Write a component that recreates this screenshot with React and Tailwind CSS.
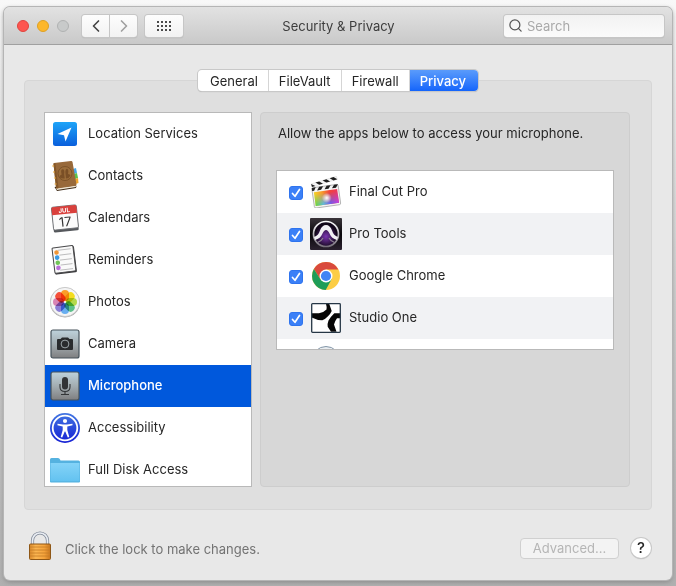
import { useState } from 'react';
import { ChevronLeft, ChevronRight, Search } from 'lucide-react';

function LocationIcon() {
    return (
        <svg viewBox="0 0 32 32" className="size-8" aria-hidden="true">
            <defs>
                <linearGradient id="loc" x1="0" y1="0" x2="0" y2="1">
                    <stop offset="0" stopColor="#1ea4f8" />
                    <stop offset="1" stopColor="#0a5fdc" />
                </linearGradient>
            </defs>
            <rect x="4" y="4" width="24" height="24" rx="2.5" fill="url(#loc)" />
            <path d="M22.5 9.5 L8.5 16 L15 17.2 L16.5 23.5 Z" fill="#fff" />
        </svg>
    );
}

function ContactsIcon() {
    return (
        <svg viewBox="0 0 32 32" className="size-8" aria-hidden="true">
            <path d="M24 9 l3 -1 1 5 -3 1z" fill="#4aa8e8" />
            <path d="M25 14 l3 -1 1 5 -3 1z" fill="#5bc24a" />
            <path d="M26 19 l3 -1 0.5 5 -3 1z" fill="#f0a52e" />
            <path d="M5.5 27 L25 24 L27.5 26 L27 28 L8 31 Z" fill="#3f2c18" />
            <path d="M7 28 L26.5 25.5 L27 27 L8 30 Z" fill="#efe6d4" />
            <path d="M4.5 4 Q4 3.2 5 3 L22 1 Q23.2 0.9 23.5 2 L27.5 24.5 Q27.6 25.5 26.5 25.7 L8 28.5 Q7.2 28.6 7 27.6 Z" fill="#98693a" />
            <path d="M4.5 4 L6.3 3 L9.5 28 L8 28.5 Q7.2 28.6 7 27.6 Z" fill="#835628" />
            <path d="M3.2 6 h2 M4 12 h2 M5 18 h2 M5.6 24 h2" stroke="#e7a537" strokeWidth="1.2" />
            <circle cx="16" cy="13.5" r="7" fill="#9c6e3b" stroke="#7d5329" strokeWidth="1" />
            <path d="M10.5 17 Q10.5 15 12.7 14.5 Q11.2 9.5 13.5 9.2 Q16 9 15.2 14 L15.7 18.5 Q12 19 10.5 17 Z M21.5 15.5 Q21 14 19 14 Q20 9 17.900 8.800 Q15.900 9 16.500 14 L17 18.500 Q20.500 18 21.500 15.500 Z" fill="#7a4f26" />
        </svg>
    );
}

function CalendarIcon() {
    return (
        <svg viewBox="0 0 32 32" className="size-8" aria-hidden="true">
            <g transform="rotate(-6 16 16)">
                <rect x="3.500" y="4" width="25" height="25.500" rx="1.500" fill="#55585c" />
                <rect x="3.500" y="4" width="25" height="23" rx="1.500" fill="#fbfbfb" stroke="#6c6f73" strokeWidth="0.900" />
                <path d="M3.500 12 V5.500 Q3.500 4 5 4 H27 Q28.500 4 28.500 5.500 V12 Z" fill="#d9403c" />
                <text x="16" y="10.500" fontSize="6" fontWeight="700" fill="#fff" textAnchor="middle">JUL</text>
                <text x="16" y="24.500" fontSize="13" fill="#333" textAnchor="middle">17</text>
            </g>
        </svg>
    );
}

function RemindersIcon() {
    return (
        <svg viewBox="0 0 32 32" className="size-8" aria-hidden="true">
            <g transform="rotate(-7 16 16)">
                <rect x="4.500" y="3" width="22" height="26.500" rx="1.500" fill="#3c3c3e" />
                <rect x="4.500" y="2.500" width="21" height="25.500" rx="1" fill="#fafafa" stroke="#4b4b4d" strokeWidth="1" />
                <path d="M10 5.500 H23 M11 10.500 H23 M11 15.500 H23 M11 20.500 H23 M10 25.500 H23" stroke="#b0b0b2" strokeWidth="0.800" />
                <circle cx="8.500" cy="7.500" r="2.300" fill="#ef9536" />
                <circle cx="8.500" cy="12.700" r="2.300" fill="#3b9be4" />
                <circle cx="8.500" cy="17.900" r="2.300" fill="#71c557" />
                <circle cx="8.500" cy="23" r="2.300" fill="#b96fd8" />
            </g>
        </svg>
    );
}

const petals = ['#fb9d28', '#f4dc1e', '#b4d94c', '#5cc08a', '#68aef0', '#8a7ed6', '#d884b4', '#f4503a'];

function PhotosIcon() {
    return (
        <svg viewBox="0 0 32 32" className="size-8" aria-hidden="true">
            <circle cx="16" cy="16.500" r="15" fill="#a8a8a8" />
            <circle cx="16" cy="16" r="14.600" fill="#f4f4f4" stroke="#c4c4c4" strokeWidth="0.800" />
            <g className="isolate">
                {petals.map((color, i) => (
                    <rect
                        key={color}
                        x="12"
                        y="4"
                        width="8"
                        height="11"
                        rx="4"
                        fill={color}
                        transform={`rotate(${i * 45} 16 16)`}
                        className="mix-blend-multiply"
                    />
                ))}
            </g>
        </svg>
    );
}

function MetalTile({ id, children }) {
    return (
        <svg viewBox="0 0 32 32" className="size-8" aria-hidden="true">
            <defs>
                <linearGradient id={id} x1="0" y1="0" x2="0" y2="1">
                    <stop offset="0" stopColor="#bed2dc" />
                    <stop offset="0.500" stopColor="#a3adb1" />
                    <stop offset="1" stopColor="#7f7f80" />
                </linearGradient>
            </defs>
            <rect x="2" y="2" width="28" height="28" rx="2" fill={`url(#${id})`} stroke="#46535b" strokeWidth="1.200" />
            {children}
        </svg>
    );
}

function CameraIcon() {
    return (
        <MetalTile id="cam">
            <path d="M9 11 H11.500 L13 9.500 H19 L20.500 11 H23 Q24 11 24 12 V21 Q24 22 23 22 H9 Q8 22 8 21 V12 Q8 11 9 11 Z" fill="#292b2d" />
            <circle cx="16" cy="16" r="3.900" fill="#292b2d" stroke="#9aa3a7" strokeWidth="1" />
        </MetalTile>
    );
}

function MicrophoneIcon() {
    return (
        <MetalTile id="mic">
            <rect x="13" y="7" width="6" height="12.500" rx="3" fill="#323436" />
            <path d="M11 14 V17 Q11 21.500 16 21.500 Q21 21.500 21 17 V14 M16 21.500 V24 M12 24.500 H20" fill="none" stroke="#323436" strokeWidth="1.100" />
        </MetalTile>
    );
}

function AccessibilityIcon() {
    return (
        <svg viewBox="0 0 32 32" className="size-8" aria-hidden="true">
            <defs>
                <linearGradient id="acc" x1="0" y1="0" x2="0" y2="1">
                    <stop offset="0" stopColor="#4276e2" />
                    <stop offset="1" stopColor="#1520d4" />
                </linearGradient>
            </defs>
            <circle cx="16" cy="16" r="15" fill="url(#acc)" />
            <circle cx="16" cy="16" r="12.300" fill="none" stroke="#fff" strokeWidth="1.800" />
            <circle cx="16" cy="9" r="2.100" fill="#fff" />
            <path d="M8.500 11.800 L14 12.500 H18 L23.500 11.800 V13.300 L18.300 14.500 V18 L20.300 25 L18.800 25.500 L16.300 19.500 H15.700 L13.200 25.500 L11.700 25 L13.700 18 V14.500 L8.500 13.300 Z" fill="#fff" />
        </svg>
    );
}

function FolderIcon() {
    return (
        <svg viewBox="0 0 32 32" className="size-8" aria-hidden="true">
            <defs>
                <linearGradient id="folder" x1="0" y1="0" x2="0" y2="1">
                    <stop offset="0" stopColor="#84d3f8" />
                    <stop offset="1" stopColor="#63c2f0" />
                </linearGradient>
            </defs>
            <path d="M1 27.500 V5.500 Q1 4 2.500 4 H9 Q10.500 4 11 5.500 L11.500 6.500 H29.500 Q31 6.500 31 8 V27.500 Q31 28.500 30 28.500 H2 Q1 28.500 1 27.500 Z" fill="#55b2e0" />
            <path d="M1.500 9 H30.500 V26.500 Q30.500 27.300 29.700 27.300 H2.300 Q1.500 27.300 1.500 26.500 Z" fill="url(#folder)" />
        </svg>
    );
}

function FinalCutIcon() {
    return (
        <svg viewBox="0 0 32 32" className="size-8" aria-hidden="true">
            <defs>
                <linearGradient id="fcpHue" x1="0" y1="0" x2="1" y2="0">
                    <stop offset="0" stopColor="#f3d22a" />
                    <stop offset="0.350" stopColor="#f79a2c" />
                    <stop offset="0.650" stopColor="#f3433a" />
                    <stop offset="1" stopColor="#ec3a5c" />
                </linearGradient>
                <linearGradient id="fcpLow" x1="0" y1="0" x2="1" y2="0">
                    <stop offset="0" stopColor="#5fd445" />
                    <stop offset="0.350" stopColor="#58b8e8" />
                    <stop offset="0.650" stopColor="#6a5cf2" />
                    <stop offset="1" stopColor="#c63ee0" />
                </linearGradient>
                <linearGradient id="fcpFade" x1="0" y1="0" x2="0" y2="1">
                    <stop offset="0.200" stopColor="#000" />
                    <stop offset="0.900" stopColor="#fff" />
                </linearGradient>
                <mask id="fcpMask">
                    <rect x="3" y="13" width="27" height="17" fill="url(#fcpFade)" />
                </mask>
                <radialGradient id="fcpGlow">
                    <stop offset="0" stopColor="#fff" />
                    <stop offset="1" stopColor="#fff" stopOpacity="0" />
                </radialGradient>
            </defs>
            <g transform="rotate(-8 16 20)">
                <rect x="3" y="10" width="26.500" height="20.500" rx="1.500" fill="#f4f4f4" stroke="#a8a8a8" strokeWidth="0.800" />
                <rect x="4.500" y="14.500" width="23.500" height="14" fill="url(#fcpHue)" />
                <rect x="4.500" y="14.500" width="23.500" height="14" fill="url(#fcpLow)" mask="url(#fcpMask)" />
                <circle cx="16.500" cy="22" r="5" fill="url(#fcpGlow)" />
                <path d="M3 10 h4 l-2 3.200 h-2z M10.500 10 h4 l-2.500 3.200 h-4z M18 10 h4 l-2.500 3.200 h-4z M25.500 10 h4 l-2.500 3.200 h-4z" fill="#1d1d1d" />
            </g>
            <g transform="rotate(-17 2 11)">
                <rect x="2" y="7.800" width="26.500" height="3.200" fill="#f4f4f4" stroke="#c4c4c4" strokeWidth="0.300" />
                <path d="M2 7.800 l3.500 3.200 h-3.500z M6.500 7.800 h4 l3 3.200 h-4z M14 7.800 h4 l3 3.200 h-4z M21.500 7.800 h4 l3 3.200 h-4z" fill="#1d1d1d" />
            </g>
        </svg>
    );
}

function ProToolsIcon() {
    return (
        <svg viewBox="0 0 32 32" className="size-8" aria-hidden="true">
            <defs>
                <linearGradient id="ptBg" x1="0" y1="0" x2="0" y2="1">
                    <stop offset="0" stopColor="#3a343a" />
                    <stop offset="0.500" stopColor="#09070a" />
                    <stop offset="1" stopColor="#2b2230" />
                </linearGradient>
                <radialGradient id="ptGlow" cx="0.500" cy="0.600" r="0.450">
                    <stop offset="0" stopColor="#7a35b0" />
                    <stop offset="1" stopColor="#120719" />
                </radialGradient>
                <linearGradient id="ptRing" x1="0" y1="0" x2="0" y2="1">
                    <stop offset="0" stopColor="#fff" />
                    <stop offset="1" stopColor="#77707c" />
                </linearGradient>
            </defs>
            <rect width="32" height="32" rx="1" fill="url(#ptBg)" />
            <circle cx="16" cy="16" r="12.500" fill="url(#ptGlow)" stroke="url(#ptRing)" strokeWidth="1.700" />
            <path d="M4 19 Q8.500 17.500 10 12.500 Q12 7 16 7 Q20 7 22 12.500 Q23.500 17.500 28 19 L27 22 Q21.500 20.500 19.500 15.500 Q18 12 16 12 Q14 12 12.500 15.500 Q10.500 20.500 5 22 Z" fill="#f1eff3" />
            <path d="M7.500 24.500 Q11.500 23 13 20 M24.500 24.500 Q20.500 23 19 20" fill="none" stroke="#8b8290" strokeWidth="1.200" />
        </svg>
    );
}

function ChromeIcon() {
    return (
        <svg viewBox="0 0 32 32" className="size-8" aria-hidden="true">
            <circle cx="16" cy="16" r="14" fill="#fccd45" />
            <path d="M16 9.500 H28.400 A14 14 0 0 0 3.900 9 L10.400 19.300 Z" fill="#d94a3d" />
            <path d="M3.900 9 A14 14 0 0 0 15.700 30 L21.600 19.300 L10.400 19.300 Z" fill="#1f9d58" />
            <circle cx="16" cy="16" r="6.500" fill="#fff" />
            <circle cx="16" cy="16" r="5.100" fill="#4285f4" />
        </svg>
    );
}

function StudioOneIcon() {
    return (
        <svg viewBox="0 0 32 32" className="size-8" aria-hidden="true">
            <rect x="1.700" y="1.700" width="28.600" height="28.600" rx="0.800" fill="#fff" />
            <path d="M16 2 L19.300 2 L21.700 9 Q20.500 12 17.700 14.500 Q15.500 17 12.300 18.300 Q7 18.300 1.700 15.500 V11.300 H9 Q13 11 16.500 7.500 Q17 5 16 2 Z" fill="#060606" />
            <path d="M24.300 11.300 H30.300 V16.300 H27 Q25 19 24 22.500 L26.500 29.700 H21 L17.700 24.700 Q17.300 21.500 18.500 18.500 Q21 14.500 24.300 11.300 Z" fill="#060606" />
            <rect x="1.700" y="1.700" width="28.600" height="28.600" rx="0.800" fill="none" stroke="#263746" strokeWidth="1.300" />
        </svg>
    );
}

function RingIcon() {
    return (
        <svg viewBox="0 0 32 32" className="size-8" aria-hidden="true">
            <circle cx="16" cy="16.500" r="14" fill="#e9edf0" stroke="#8296a8" strokeWidth="1" />
        </svg>
    );
}

function LockIcon() {
    return (
        <svg viewBox="0 0 24 30" className="h-[30px] w-6" aria-hidden="true">
            <defs>
                <linearGradient id="lock" x1="0" y1="0" x2="1" y2="0">
                    <stop offset="0" stopColor="#d9882a" />
                    <stop offset="0.300" stopColor="#fbb652" />
                    <stop offset="0.700" stopColor="#f5a33b" />
                    <stop offset="1" stopColor="#c8751d" />
                </linearGradient>
            </defs>
            <path d="M4.500 14 V9.500 A7.500 7.500 0 0 1 19.500 9.500 V14" fill="none" stroke="#7d8695" strokeWidth="3.200" />
            <path d="M4.500 14 V9.500 A7.500 7.500 0 0 1 19.500 9.500 V14" fill="none" stroke="#e9edf3" strokeWidth="1.700" />
            <rect x="1.500" y="13" width="21" height="15.500" rx="1" fill="url(#lock)" stroke="#8f5716" strokeWidth="1" />
            <path d="M2 16 H22 M2 19 H22 M2 22 H22 M2 25 H22" stroke="#c47c26" strokeWidth="0.800" />
        </svg>
    );
}

const tabs = ['General', 'FileVault', 'Firewall', 'Privacy'];

const categories = [
    { name: 'Location Services', Icon: LocationIcon },
    { name: 'Contacts', Icon: ContactsIcon },
    { name: 'Calendars', Icon: CalendarIcon },
    { name: 'Reminders', Icon: RemindersIcon },
    { name: 'Photos', Icon: PhotosIcon },
    { name: 'Camera', Icon: CameraIcon },
    { name: 'Microphone', Icon: MicrophoneIcon },
    { name: 'Accessibility', Icon: AccessibilityIcon },
    { name: 'Full Disk Access', Icon: FolderIcon },
];

const apps = [
    { name: 'Final Cut Pro', Icon: FinalCutIcon },
    { name: 'Pro Tools', Icon: ProToolsIcon },
    { name: 'Google Chrome', Icon: ChromeIcon },
    { name: 'Studio One', Icon: StudioOneIcon },
];

const toolButton = 'flex h-[22px] items-center justify-center bg-linear-to-b from-[#fdfdfd] to-[#f2f2f2] shadow-[0_0_0_1px_#c6c6c6,0_1px_1px_#999]';

function TitleBar() {
    return (
        <header className="grid h-[38px] grid-cols-[1fr_auto_1fr] items-center rounded-t-md border-b border-[#a0a0a0] bg-linear-to-b from-[#e2e2e2] to-[#c9c9c9] pr-2 pl-[13px]">
            <div className="flex items-center">
                <div className="flex gap-2">
                    <button aria-label="Close" className="size-3 rounded-full border border-[#e0443e] bg-[#fe5650]" />
                    <button aria-label="Minimize" className="size-3 rounded-full border border-[#dea123] bg-[#fdb72b]" />
                    <button aria-label="Zoom" disabled className="size-3 rounded-full border border-[#b0b2b2] bg-[#c8caca]" />
                </div>
                <div className="ml-[13px] flex gap-px">
                    <button aria-label="Back" className={`${toolButton} w-[27px] rounded-l-[3px] text-[#444]`}>
                        <ChevronLeft size={20} strokeWidth={2} />
                    </button>
                    <button aria-label="Forward" className={`${toolButton} w-[27px] rounded-r-[3px] text-[#a0a0a0]`}>
                        <ChevronRight size={20} strokeWidth={2} />
                    </button>
                </div>
                <button aria-label="Show All" className={`${toolButton} ml-2 w-[38px] rounded-[3px]`}>
                    <span className="grid grid-cols-4 gap-[2px]">
                        {Array.from({ length: 12 }, (_, i) => (
                            <span key={i} className="size-[2px] bg-[#4a4a4a]" />
                        ))}
                    </span>
                </button>
            </div>
            <h1 className="pr-1 text-[13px] text-[#3d3d3d]">Security &amp; Privacy</h1>
            <label className="flex h-[22px] w-40 items-center gap-1 justify-self-end rounded-[3px] bg-linear-to-b from-[#f2f2f2] to-[#fbfbfb] pl-1 shadow-[0_0_0_1px_#c6c6c6,0_1px_1px_#999]">
                <Search size={15} strokeWidth={2} className="shrink-0 text-[#555]" />
                <input
                    type="search"
                    aria-label="Search"
                    placeholder="Search"
                    className="w-full min-w-0 bg-transparent text-[13px] outline-none placeholder:text-[#a9a9a9]"
                />
            </label>
        </header>
    );
}

function AppRow({ name, Icon }) {
    const [allowed, setAllowed] = useState(true);

    return (
        <li className="even:bg-[#f1f2f4]">
            <label className="flex h-[42px] items-center pl-3">
                <span className="relative mt-0.5 size-[14px]">
                    <input
                        type="checkbox"
                        checked={allowed}
                        onChange={(e) => setAllowed(e.target.checked)}
                        className="block size-[14px] appearance-none rounded-[3px] border border-[#bbb] bg-white checked:border-[#2f74ee] checked:bg-[#3b80f7]"
                    />
                    {allowed && (
                        <svg viewBox="0 0 14 14" className="pointer-events-none absolute inset-0" aria-hidden="true">
                            <path d="M3.500 7.500 L6 10.300 L10.500 3.500" fill="none" stroke="#fff" strokeWidth="1.700" strokeLinecap="round" strokeLinejoin="round" />
                        </svg>
                    )}
                </span>
                <span className="ml-[7px]"><Icon /></span>
                <span className="ml-[7px] pb-0.5">{name}</span>
            </label>
        </li>
    );
}

export default function App() {
    const [tab, setTab] = useState('Privacy');
    const [category, setCategory] = useState('Microphone');

    return (
        <div className="min-h-screen overflow-hidden bg-linear-to-b from-[#f8f8f8] via-[#cfcfcf] via-50% to-[#b0b0b0] px-1 pt-[7px] pb-1.5 font-['Inter','Liberation_Sans',sans-serif] text-[13px] leading-4 text-[#262626]">
            <div className="rounded-md bg-[#e8e8e8] shadow-[0_0_0_1px_#b5b5b5,0_2px_5px_#888]">
                <TitleBar />

                <main className="px-5 pt-[25px]">
                    {/* Tabs sit across the top edge of the group box */}
                    <div role="tablist" className="relative z-10 -mb-[11px] flex justify-center">
                        <div className="flex h-[21px] rounded-[4px] bg-white shadow-[0_0_0_1px_#c8c8c8,0_1px_1px_#aaa]">
                            {tabs.map((name) => (
                                <button
                                    key={name}
                                    role="tab"
                                    aria-selected={tab === name}
                                    onClick={() => setTab(name)}
                                    className={`border-r border-[#d5d5d5] px-[10px] first:rounded-l-[4px] first:pl-3 last:rounded-r-[4px] last:border-r-0 last:pr-3 ${
                                        tab === name ? 'bg-linear-to-b from-[#5a9bfb] to-[#1364fb] font-medium text-white' : ''
                                    }`}
                                >
                                    {name}
                                </button>
                            ))}
                        </div>
                    </div>

                    <section className="flex gap-2 rounded-[4px] border border-[#d6d6d6] bg-[#dfdfdf] pt-[31px] pr-[21px] pb-[22px] pl-[19px]">
                        {/* Categories */}
                        <ul className="h-[375px] w-52 shrink-0 overflow-hidden border border-[#b9b9b9] bg-white">
                            {categories.map(({ name, Icon }) => (
                                <li key={name}>
                                    <button
                                        onClick={() => setCategory(name)}
                                        className={`flex h-[42px] w-full items-center gap-[7px] pl-1 text-left ${
                                            category === name ? 'bg-[#0058dc] font-medium text-white' : ''
                                        }`}
                                    >
                                        <Icon />
                                        <span className="pb-0.5">{name}</span>
                                    </button>
                                </li>
                            ))}
                        </ul>

                        {/* Apps with access */}
                        <div className="min-w-0 flex-1 rounded-[4px] border border-[#cdcdcd] bg-[#d7d7d7] px-[15px] pt-3">
                            <p className="pl-0.5">Allow the apps below to access your microphone.</p>
                            <ul className="mt-[29px] h-[180px] overflow-hidden border border-[#b9b9b9] bg-white">
                                {apps.map((app) => (
                                    <AppRow key={app.name} {...app} />
                                ))}
                                <li className="flex h-[42px] items-center pl-[33px]" aria-hidden="true">
                                    <RingIcon />
                                </li>
                            </ul>
                        </div>
                    </section>
                </main>

                <footer className="flex h-[70px] items-center pr-[21px] pl-6">
                    <button aria-label="Unlock" className="mt-0.5"><LockIcon /></button>
                    <p className="mt-2 ml-[13px] text-[#737373]">Click the lock to make changes.</p>
                    <button disabled className="mt-1.5 ml-auto h-[21px] w-[99px] rounded-[4px] border border-[#d0d0d0] bg-[#f3f3f3] text-[#b5b5b5]">
                        Advanced...
                    </button>
                    <button aria-label="Help" className="mt-1.5 ml-3 size-5 rounded-full bg-white text-[15px] font-medium shadow-[0_0_0_1px_#c8c8c8,0_1px_1px_#999]">
                        ?
                    </button>
                </footer>
            </div>
        </div>
    );
}
